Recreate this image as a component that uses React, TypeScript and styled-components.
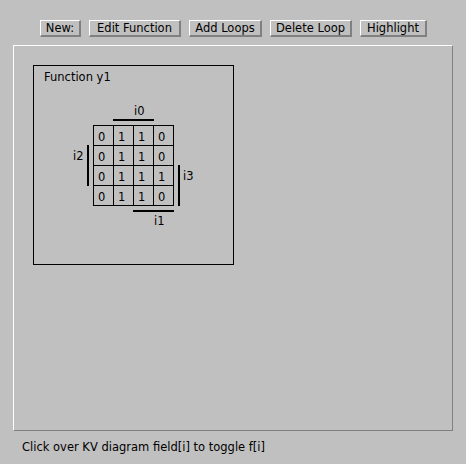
import styled, { createGlobalStyle } from 'styled-components';

const GlobalStyle = createGlobalStyle`
  html, body {
    margin: 0;
    padding: 0;
    background: #c0c0c0;
  }
  body {
    font-family: 'DejaVu Sans', 'Liberation Sans', sans-serif;
    font-size: 12px;
    color: #000;
  }
`;

const Frame = styled.div`
  width: 466px;
  height: 464px;
  display: flex;
  flex-direction: column;
  padding-top: 20px;
  box-sizing: border-box;
`;

const Toolbar = styled.div`
  display: flex;
  gap: 8px;
  height: 17px;
  padding-left: 40px;
`;

const Button = styled.button<{ $w: number }>`
  width: ${p => p.$w}px;
  height: 17px;
  padding: 0;
  margin: 0;
  background: #c0c0c0;
  border-top: 1px solid #ffffff;
  border-left: 1px solid #ffffff;
  border-right: 2px solid #808080;
  border-bottom: 2px solid #808080;
  font-family: 'DejaVu Sans', 'Liberation Sans', sans-serif;
  font-size: 11.5px;
  line-height: 14px;
  color: #000;
  text-align: center;
`;

const Panel = styled.div`
  margin: 8px 0 0 13px;
  width: 440px;
  height: 386px;
  box-sizing: border-box;
  border-top: 1px solid #ffffff;
  border-left: 1px solid #ffffff;
  border-right: 1px solid #808080;
  border-bottom: 1px solid #808080;
  padding: 19px;
`;

const FunctionBox = styled.div`
  width: 201px;
  height: 200px;
  box-sizing: border-box;
  border: 1px solid #000;
  position: relative;
`;

const Diagram = styled.svg`
  position: absolute;
  left: -1px;
  top: -1px;
  font-family: 'DejaVu Sans', 'Liberation Sans', sans-serif;
  font-size: 11.5px;
`;

const Status = styled.div`
  margin: 9px 0 0 22px;
  font-size: 11.5px;
  line-height: 14px;
`;

const cells = [
  [0, 1, 1, 0],
  [0, 1, 1, 0],
  [0, 1, 1, 1],
  [0, 1, 1, 0],
];

const buttons: [string, number][] = [
  ['New:', 41],
  ['Edit Function', 92],
  ['Add Loops', 73],
  ['Delete Loop', 82],
  ['Highlight', 67],
];

function KVDiagram() {
  const gx = 60;
  const gy = 60;
  const c = 20;
  return (
    <Diagram width={201} height={200}>
      <text x={11} y={16}>Function y1</text>
      {cells.map((row, r) =>
        row.map((v, col) => (
          <text key={`${r}-${col}`} x={gx + col * c + 5} y={gy + r * c + 16}>
            {v}
          </text>
        )),
      )}
      {[0, 1, 2, 3, 4].map(i => (
        <line key={`v${i}`} x1={gx + i * c + 0.5} y1={gy} x2={gx + i * c + 0.5} y2={gy + 4 * c + 1} stroke="#000" />
      ))}
      {[0, 1, 2, 3, 4].map(i => (
        <line key={`h${i}`} x1={gx} y1={gy + i * c + 0.5} x2={gx + 4 * c + 1} y2={gy + i * c + 0.5} stroke="#000" />
      ))}
      <rect x={80} y={54} width={41} height={2} />
      <text x={101} y={50}>i0</text>
      <rect x={54} y={80} width={2} height={41} />
      <text x={40} y={95}>i2</text>
      <rect x={145} y={100} width={2} height={41} />
      <text x={150} y={115}>i3</text>
      <rect x={100} y={145} width={41} height={2} />
      <text x={121} y={160}>i1</text>
    </Diagram>
  );
}

export default function App() {
  return (
    <>
      <GlobalStyle />
      <Frame>
        <Toolbar>
          {buttons.map(([label, w]) => (
            <Button key={label} $w={w}>{label}</Button>
          ))}
        </Toolbar>
        <Panel>
          <FunctionBox>
            <KVDiagram />
          </FunctionBox>
        </Panel>
        <Status>Click over KV diagram field[i] to toggle f[i]</Status>
      </Frame>
    </>
  );
}
